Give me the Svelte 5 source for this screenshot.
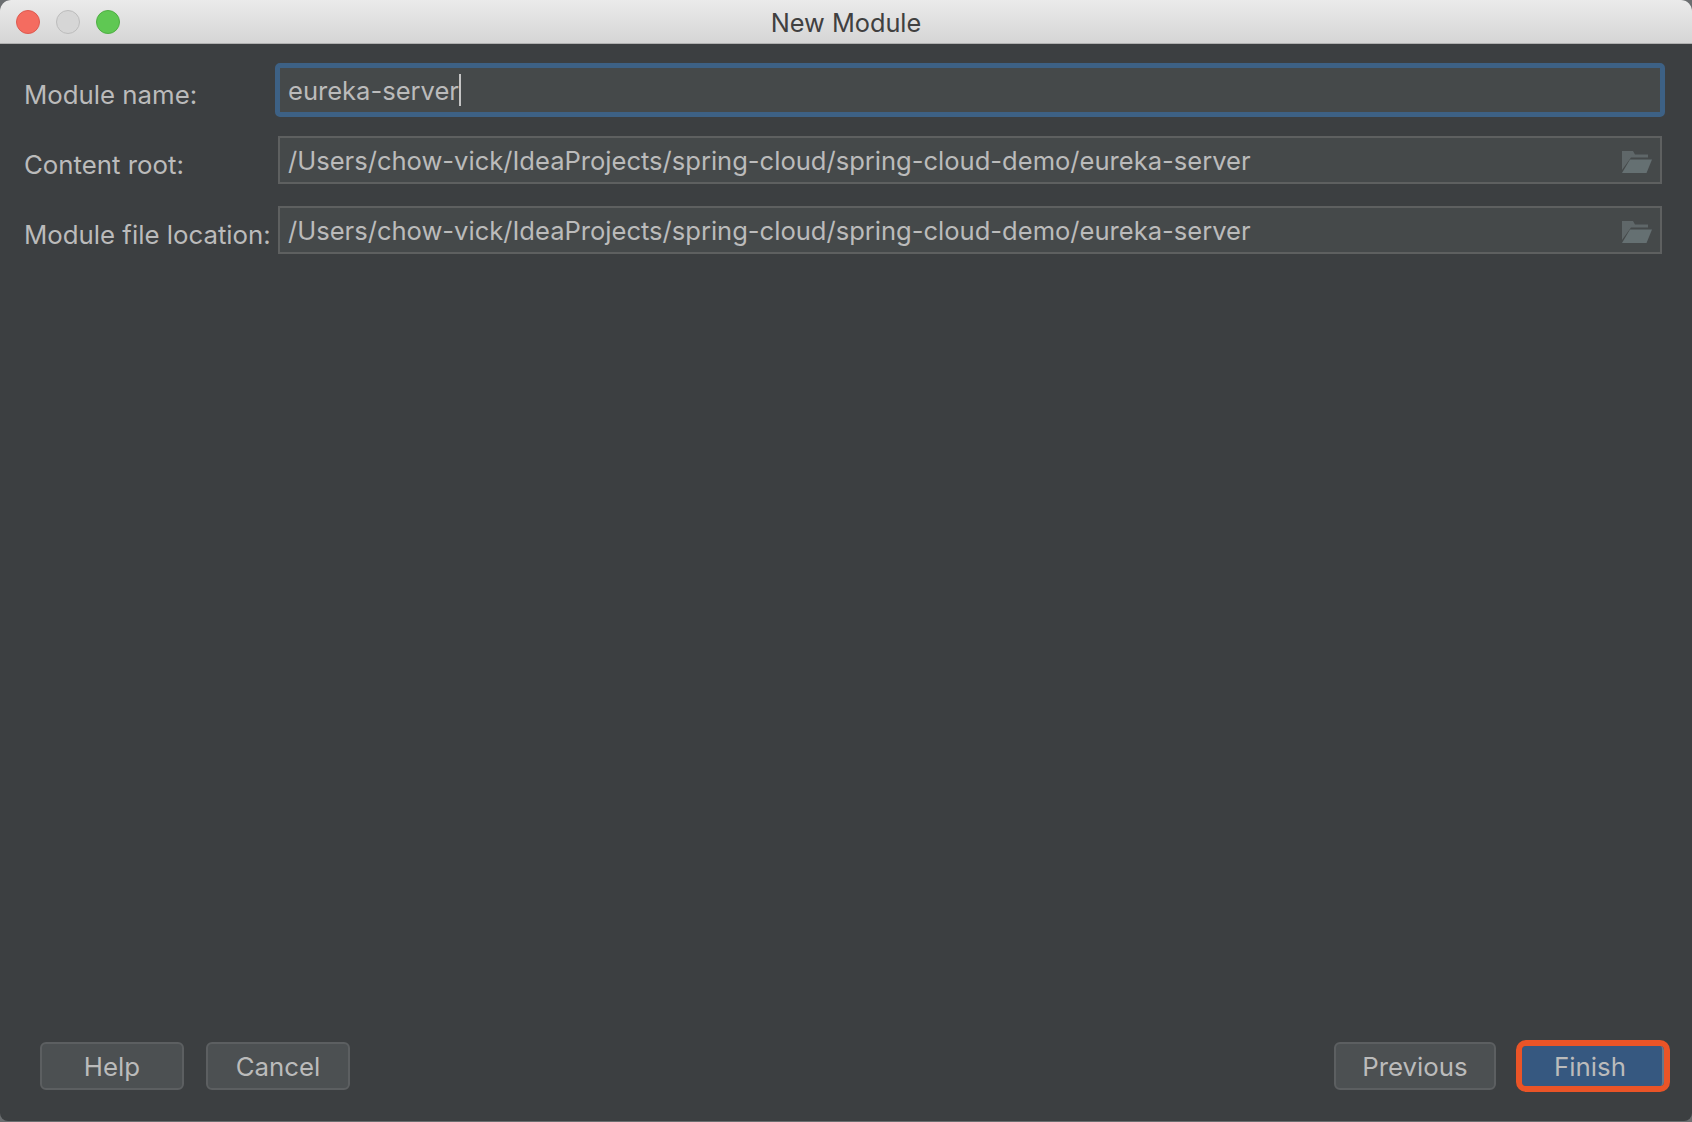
<script lang="ts">
  const fields = [
    { label: "Module name:", value: "eureka-server", focused: true },
    { label: "Content root:", value: "/Users/chow-vick/IdeaProjects/spring-cloud/spring-cloud-demo/eureka-server", browse: true },
    { label: "Module file location:", value: "/Users/chow-vick/IdeaProjects/spring-cloud/spring-cloud-demo/eureka-server", browse: true },
  ];
</script>

<div class="window">
  <header class="titlebar">
    <div class="lights">
      <span class="light red"></span>
      <span class="light grey"></span>
      <span class="light green"></span>
    </div>
    <span class="title">New Module</span>
  </header>

  <main class="form">
    {#each fields as f}
      <span class="label">{f.label}</span>
      <div class="field" class:focused={f.focused}>
        <span class="value">{f.value}</span>
        {#if f.focused}<span class="caret"></span>{/if}
        {#if f.browse}
          <svg class="folder" width="30" height="22" viewBox="0 0 30 22">
            <path d="M0 0H11L13 3.5H26V6.5H9L0 19Z" fill="#5f6769" />
            <path d="M8 8.5H30L24.5 22H0Z" fill="#657072" />
          </svg>
        {/if}
      </div>
    {/each}
  </main>

  <footer class="footer">
    <button class="btn narrow">Help</button>
    <button class="btn narrow">Cancel</button>
    <div class="spacer"></div>
    <button class="btn previous">Previous</button>
    <button class="btn finish">Finish</button>
  </footer>
</div>

<style>
  :global(body) {
    margin: 0;
    background: #6b6e70;
  }

  .window {
    width: 1692px;
    height: 1121px;
    display: flex;
    flex-direction: column;
    background: #3c3f41;
    border-radius: 11px 11px 8px 8px;
    overflow: hidden;
    font-family: Inter, "Liberation Sans", sans-serif;
    color: #bbbbbb;
  }

  .titlebar {
    position: relative;
    flex: none;
    height: 43px;
    display: flex;
    align-items: center;
    justify-content: center;
    background: linear-gradient(#ebebeb, #d5d5d5);
    border-bottom: 1px solid #b0b0b0;
  }

  .lights {
    position: absolute;
    left: 16px;
    top: 10px;
    display: flex;
    gap: 16px;
  }

  .light {
    width: 24px;
    height: 24px;
    box-sizing: border-box;
    border-radius: 50%;
    border: 1px solid;
  }

  .red {
    background: #f46c60;
    border-color: #dd5a50;
  }

  .grey {
    background: #d6d6d6;
    border-color: #bcbcbc;
  }

  .green {
    background: #5fc853;
    border-color: #4fae44;
  }

  .title {
    font-size: 25.3px;
    padding-top: 2px;
    color: #404040;
  }

  .form {
    display: grid;
    grid-template-columns: 254px 1fr;
    row-gap: 22px;
    padding: 22px 30px 0 24px;
  }

  .label {
    padding-top: 11px;
    font-size: 25.8px;
    line-height: 36px;
    white-space: nowrap;
  }

  .field {
    position: relative;
    height: 48px;
    box-sizing: border-box;
    display: flex;
    align-items: center;
    padding: 0 8px;
    background: #45494a;
    border: 2px solid #5e6060;
    font-size: 25.55px;
  }

  .focused {
    border-color: #4a6d8e;
    outline: 5px solid #3d6185;
    outline-offset: -2px;
    border-radius: 2px;
  }

  .value {
    line-height: 36px;
    margin-top: 2px;
    white-space: nowrap;
  }

  .caret {
    width: 2px;
    height: 32px;
    background: #c4c4c4;
  }

  .folder {
    position: absolute;
    right: 8px;
    top: 13px;
  }

  .footer {
    margin-top: auto;
    display: flex;
    align-items: center;
    padding: 0 29px 31px 40px;
    gap: 22px;
  }

  .spacer {
    flex: 1;
  }

  .btn {
    height: 48px;
    box-sizing: border-box;
    border: 2px solid #5c5f61;
    border-radius: 6px;
    background: #4c5052;
    color: #bbbbbb;
    font: inherit;
    font-size: 25.8px;
    padding: 0;
  }

  .narrow {
    width: 144px;
  }

  .previous {
    width: 162px;
  }

  .finish {
    width: 142px;
    height: 40px;
    background: #365880;
    border: none;
    border-right: 2px solid #68788a;
    border-radius: 4px;
    outline: 6px solid #ea5427;
    outline-offset: 0;
    margin-left: 4px;
    margin-right: -1px;
    padding-right: 4px;
  }
</style>
